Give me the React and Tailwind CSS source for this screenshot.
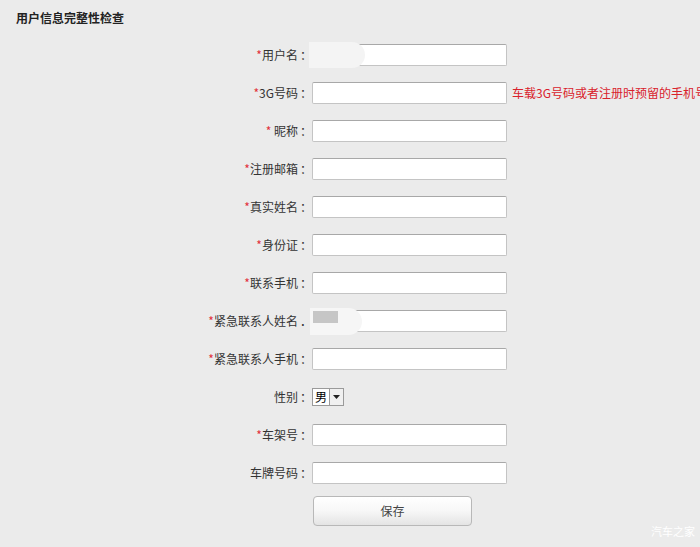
import React, { useState } from 'react';

const fields = [
  { label: '用户名', required: true, blur: 'name' },
  { label: '3G号码', required: true, hint: '车载3G号码或者注册时预留的手机号码' },
  { label: '昵称', required: true, space: true },
  { label: '注册邮箱', required: true },
  { label: '真实姓名', required: true },
  { label: '身份证', required: true },
  { label: '联系手机', required: true },
  { label: '紧急联系人姓名', required: true, blur: 'contact', dot: true },
  { label: '紧急联系人手机', required: true },
  { label: '性别', select: true },
  { label: '车架号', required: true },
  { label: '车牌号码' },
];

const Row = ({ field }) => {
  const [value, setValue] = useState('');
  return (
    <div className="flex items-center h-[38px]">
      <label className="w-[312px] shrink-0 text-right text-[12px] text-[#333]">
        {field.required && <span className="text-[#e2313a]">*</span>}
        {field.space && ' '}
        {field.label}
        <span className="ml-[2px]">{field.dot ? '．' : '：'}</span>
      </label>
      {field.select ? (
        <div className="flex items-center h-[18px] border border-[#9a9a9a] bg-white">
          <span className="px-[2px] text-[12px] leading-[16px] text-black">男</span>
          <span className="flex items-center justify-center w-[14px] h-[16px] border-l border-[#9a9a9a] bg-[#f0f0f0]">
            <svg width="7" height="4" viewBox="0 0 7 4">
              <path d="M0 0h7L3.5 4z" fill="#222" />
            </svg>
          </span>
        </div>
      ) : (
        <div className="relative">
          <input
            type="text"
            value={value}
            onChange={(e) => setValue(e.target.value)}
            className="block w-[195px] h-[22px] bg-white border border-[#c4c4c4] border-t-[#a8a8a8] rounded-[2px] outline-none px-1 text-[12px]"
          />
          {field.blur === 'name' && (
            <div className="absolute left-[-3px] top-[-2px] w-[56px] h-[26px] bg-[#f4f4f4] rounded-r-full" />
          )}
          {field.blur === 'contact' && (
            <>
              <div className="absolute left-[-2px] top-[-2px] w-[52px] h-[27px] bg-[#f6f6f6] rounded-r-full" />
              <div className="absolute left-[1px] top-[1px] w-[25px] h-[12px] bg-[#c6c6c6]" />
            </>
          )}
        </div>
      )}
      {field.hint && (
        <span className="ml-[5px] whitespace-nowrap text-[12px] text-[#d9222c]">{field.hint}</span>
      )}
    </div>
  );
};

const App = () => {
  return (
    <main
      className="relative w-[700px] h-[547px] overflow-hidden bg-[#ebebeb]"
      style={{ fontFamily: '"Microsoft YaHei", "Noto Sans CJK SC", sans-serif' }}
    >
      <div className="h-[36px] flex items-center pl-[16px]">
        <h3 className="text-[12px] font-bold text-[#222]">用户信息完整性检查</h3>
      </div>
      <form onSubmit={(e) => e.preventDefault()}>
        {fields.map((f) => (
          <Row key={f.label} field={f} />
        ))}
        <div className="flex items-center h-[38px] pl-[313px]">
          <button
            type="submit"
            className="w-[159px] h-[30px] rounded-[4px] border border-[#b8b8b8] bg-gradient-to-b from-white via-[#f7f7f7] to-[#e4e4e4] text-[12px] text-[#444]"
          >
            保存
          </button>
        </div>
      </form>
      <div className="absolute right-[5px] bottom-[8px] text-[11px] text-white">汽车之家</div>
    </main>
  );
};

export default App;
